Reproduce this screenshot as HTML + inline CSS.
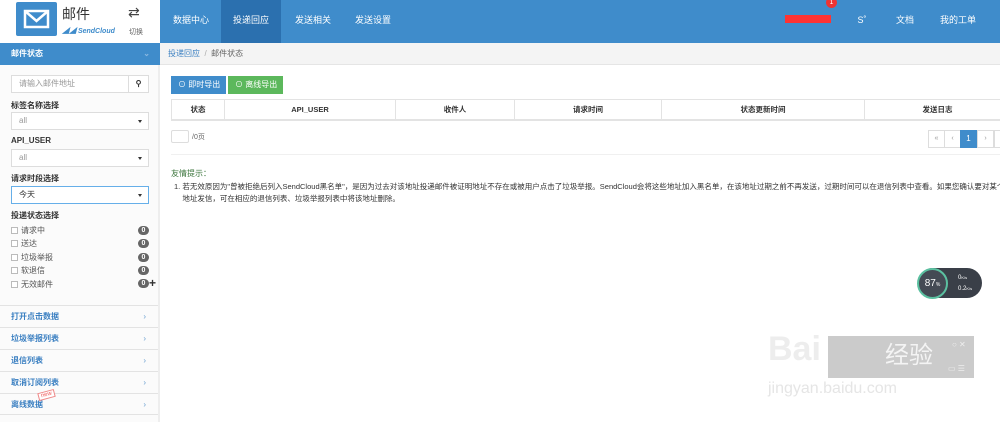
<!DOCTYPE html>
<html><head><meta charset="utf-8"><style>
*{box-sizing:border-box;margin:0;padding:0}
body{width:1000px;height:422px;overflow:hidden;background:#fff;font-family:"Liberation Sans","Noto Sans CJK SC",sans-serif;font-size:8px;color:#333;position:relative}
.abs{position:absolute}
.top{left:160px;top:0;width:840px;height:43px;background:#3f8ccb}
.nav{top:0;height:43px;line-height:40px;color:#fff;font-size:9px;text-align:center}
.side{left:0;top:43px;width:160px;height:379px;background:#fbfbfb;border-right:2px solid #eee}
.inp{background:#fff;border:1px solid #ddd;height:18px;line-height:16px;padding-left:7px;color:#999;font-size:8px}
.lbl{font-size:8px;color:#333;font-weight:bold}
.sel:after{content:"";position:absolute;right:6px;top:7px;border:2.5px solid transparent;border-top:3px solid #333}
.cb{left:11px;width:7px;height:7px;border:1px solid #bbb;background:#fff}
.ct{left:21px;color:#555;font-size:8px}
.badge{left:138px;width:11px;height:9px;border-radius:5px;background:#666;color:#fff;font-size:7px;font-weight:bold;text-align:center;line-height:9px}
.item{left:0;width:158px;height:22px;border-top:1px solid #e3e3e3;color:#3a7fc1;font-size:8px;font-weight:bold;line-height:21px;padding-left:11px}
.item span{position:absolute;right:12px;color:#6a9fd0;font-weight:normal}
th{font-size:7.5px;font-weight:bold;color:#333;border:1px solid #e3e3e3;height:20px}
.pg{top:130px;width:17px;height:18px;border:1px solid #ddd;text-align:center;line-height:16px;color:#999;font-size:7px;background:#fff}
</style></head><body>
<div class="abs" style="left:0;top:0;width:160px;height:43px;background:#fff"></div>
<div class="abs" style="left:16px;top:2px;width:41px;height:34px;background:#3f8ccb;border-radius:2px">
<svg width="41" height="34" viewBox="0 0 41 34"><rect x="9" y="9" width="23" height="16" fill="none" stroke="#fff" stroke-width="2.5"/><path d="M9 9 L20.5 19 L32 9" fill="none" stroke="#fff" stroke-width="2.5"/></svg></div>
<div class="abs" style="left:62px;top:4px;font-size:14px;color:#333">邮件</div>
<div class="abs" style="left:62px;top:26px;font-size:7px;color:#3f8ccb;font-style:italic;font-weight:bold">◢◢ SendCloud</div>
<div class="abs" style="left:128px;top:5px;font-size:14px;color:#444;font-family:'DejaVu Sans'">⇄</div>
<div class="abs" style="left:129px;top:27px;font-size:7px;color:#666">切换</div>
<div class="abs top"></div>
<div class="abs nav" style="left:221px;width:60px;background:#2b70af"></div>
<div class="abs nav" style="left:163px;width:56px">数据中心</div>
<div class="abs nav" style="left:221px;width:60px">投递回应</div>
<div class="abs nav" style="left:283px;width:60px">发送相关</div>
<div class="abs nav" style="left:343px;width:60px">发送设置</div>
<div class="abs" style="left:785px;top:15px;width:46px;height:8px;background:#f33"></div>
<div class="abs" style="left:826px;top:-3px;width:11px;height:11px;border-radius:50%;background:#e33;color:#fff;font-size:7px;text-align:center;line-height:11px">1</div>
<div class="abs nav" style="left:852px;width:20px">S˚</div>
<div class="abs nav" style="left:890px;width:30px">文档</div>
<div class="abs nav" style="left:935px;width:46px">我的工单</div>
<div class="abs side"></div>
<div class="abs" style="left:0;top:43px;width:160px;height:22px;background:#3f8ccb;color:#fff;font-weight:bold;font-size:8px;line-height:22px;padding-left:11px">邮件状态<span style="position:absolute;right:10px;color:#8bb8e0">⌄</span></div>
<div class="abs" style="left:160px;top:43px;width:840px;height:22px;background:#f4f4f4;border-bottom:1px solid #e5e5e5;line-height:22px;padding-left:8px;font-size:8px;color:#3a7fc1">投递回应 <span style="color:#aaa">&nbsp;/&nbsp;</span> <span style="color:#666">邮件状态</span></div>
<div class="abs inp" style="left:11px;top:75px;width:118px">请输入邮件地址</div>
<div class="abs inp" style="left:128px;top:75px;width:21px;padding:0;text-align:center;color:#333;font-weight:bold">⚲</div>
<div class="abs lbl" style="left:11px;top:100px">标签名称选择</div>
<div class="abs inp sel" style="left:11px;top:112px;width:138px">all</div>
<div class="abs lbl" style="left:11px;top:136px">API_USER</div>
<div class="abs inp sel" style="left:11px;top:149px;width:138px">all</div>
<div class="abs lbl" style="left:11px;top:173px">请求时段选择</div>
<div class="abs inp sel" style="left:11px;top:186px;width:138px;border-color:#66afe9;color:#333">今天</div>
<div class="abs lbl" style="left:11px;top:210px">投递状态选择</div>
<div class="abs cb" style="top:227px"></div><div class="abs ct" style="top:225px">请求中</div><div class="abs badge" style="top:226px">0</div>
<div class="abs cb" style="top:240px"></div><div class="abs ct" style="top:238px">送达</div><div class="abs badge" style="top:239px">0</div>
<div class="abs cb" style="top:254px"></div><div class="abs ct" style="top:252px">垃圾举报</div><div class="abs badge" style="top:253px">0</div>
<div class="abs cb" style="top:267px"></div><div class="abs ct" style="top:265px">软退信</div><div class="abs badge" style="top:266px">0</div>
<div class="abs cb" style="top:281px"></div><div class="abs ct" style="top:279px">无效邮件</div><div class="abs badge" style="top:279px">0</div>
<div class="abs" style="left:149px;top:276px;font-size:12px;font-weight:bold;color:#333">+</div>
<div class="abs item" style="top:305px">打开点击数据<span>›</span></div>
<div class="abs item" style="top:327px">垃圾举报列表<span>›</span></div>
<div class="abs item" style="top:349px">退信列表<span>›</span></div>
<div class="abs item" style="top:371px">取消订阅列表<span>›</span></div>
<div class="abs item" style="top:393px;border-bottom:1px solid #e3e3e3">离线数据<span>›</span></div>
<div class="abs" style="left:38px;top:391px;font-size:6px;color:#e55;border:1px solid #e88;transform:rotate(-15deg);padding:0 2px;background:#fff">new</div>
<div class="abs" style="left:171px;top:76px;width:55px;height:18px;background:#3f8ccb;color:#fff;font-size:8px;line-height:18px;padding-left:7px">⊙ 即时导出</div>
<div class="abs" style="left:228px;top:76px;width:55px;height:18px;background:#5cb85c;color:#fff;font-size:8px;line-height:18px;padding-left:7px">⊙ 离线导出</div>
<table class="abs" style="left:171px;top:99px;width:840px;border-collapse:collapse;border-bottom:2px solid #e3e3e3"><tr>
<th style="width:53px">状态</th><th style="width:171px">API_USER</th><th style="width:119px">收件人</th><th style="width:147px">请求时间</th><th style="width:203px">状态更新时间</th><th>发送日志</th></tr></table>
<div class="abs" style="left:171px;top:130px;width:18px;height:13px;border:1px solid #ddd;border-radius:2px"></div>
<div class="abs" style="left:192px;top:132px;font-size:7px;color:#666">/0页</div>
<div class="abs pg" style="left:928px">«</div><div class="abs pg" style="left:944px">‹</div>
<div class="abs pg" style="left:960px;background:#3f8ccb;border-color:#3f8ccb;color:#fff;font-size:8px">1</div>
<div class="abs pg" style="left:977px">›</div><div class="abs pg" style="left:994px"></div>
<div class="abs" style="left:171px;top:154px;width:829px;border-top:1px solid #f0f0f0"></div>
<div class="abs" style="left:171px;top:168px;font-size:8px;color:#3c763d">友情提示：</div>
<div class="abs" style="left:174px;top:181px;font-size:7.5px;color:#333;white-space:nowrap;line-height:12px">1. 若无效原因为"曾被拒绝后列入SendCloud黑名单"，是因为过去对该地址投递邮件被证明地址不存在或被用户点击了垃圾举报。SendCloud会将这些地址加入黑名单，在该地址过期之前不再发送，过期时间可以在退信列表中查看。如果您确认要对某个<br>&nbsp;&nbsp;&nbsp;&nbsp;地址发信，可在相应的退信列表、垃圾举报列表中将该地址删除。</div>
<div class="abs" style="left:918px;top:268px;width:64px;height:30px;border-radius:15px;background:#3a3f48"></div>
<div class="abs" style="left:917px;top:268px;width:31px;height:31px;border-radius:50%;background:#444a54;border:2px solid #5bc0a0;color:#fff;font-size:10px;text-align:center;line-height:27px">87<span style="font-size:5px">%</span></div>
<div class="abs" style="left:958px;top:275px;font-size:6px;color:#fff">0<span style="font-size:4px">K/s</span></div>
<div class="abs" style="left:958px;top:286px;font-size:6px;color:#fff">0.2<span style="font-size:4px">K/s</span></div>
<div class="abs" style="left:828px;top:336px;width:146px;height:42px;background:rgba(160,160,160,.55)"></div>
<div class="abs" style="left:768px;top:330px;font-size:34px;font-weight:bold;color:rgba(235,235,235,.9)">Bai</div>
<div class="abs" style="left:885px;top:335px;font-size:24px;color:rgba(245,245,245,.95)">经验</div>
<div class="abs" style="left:952px;top:340px;font-size:8px;color:#eee">○ ✕</div>
<div class="abs" style="left:948px;top:364px;font-size:8px;color:#eee">▭ ☰</div>
<div class="abs" style="left:768px;top:380px;font-size:16px;color:rgba(225,225,225,.85)">jingyan.baidu.com</div>
</body></html>
